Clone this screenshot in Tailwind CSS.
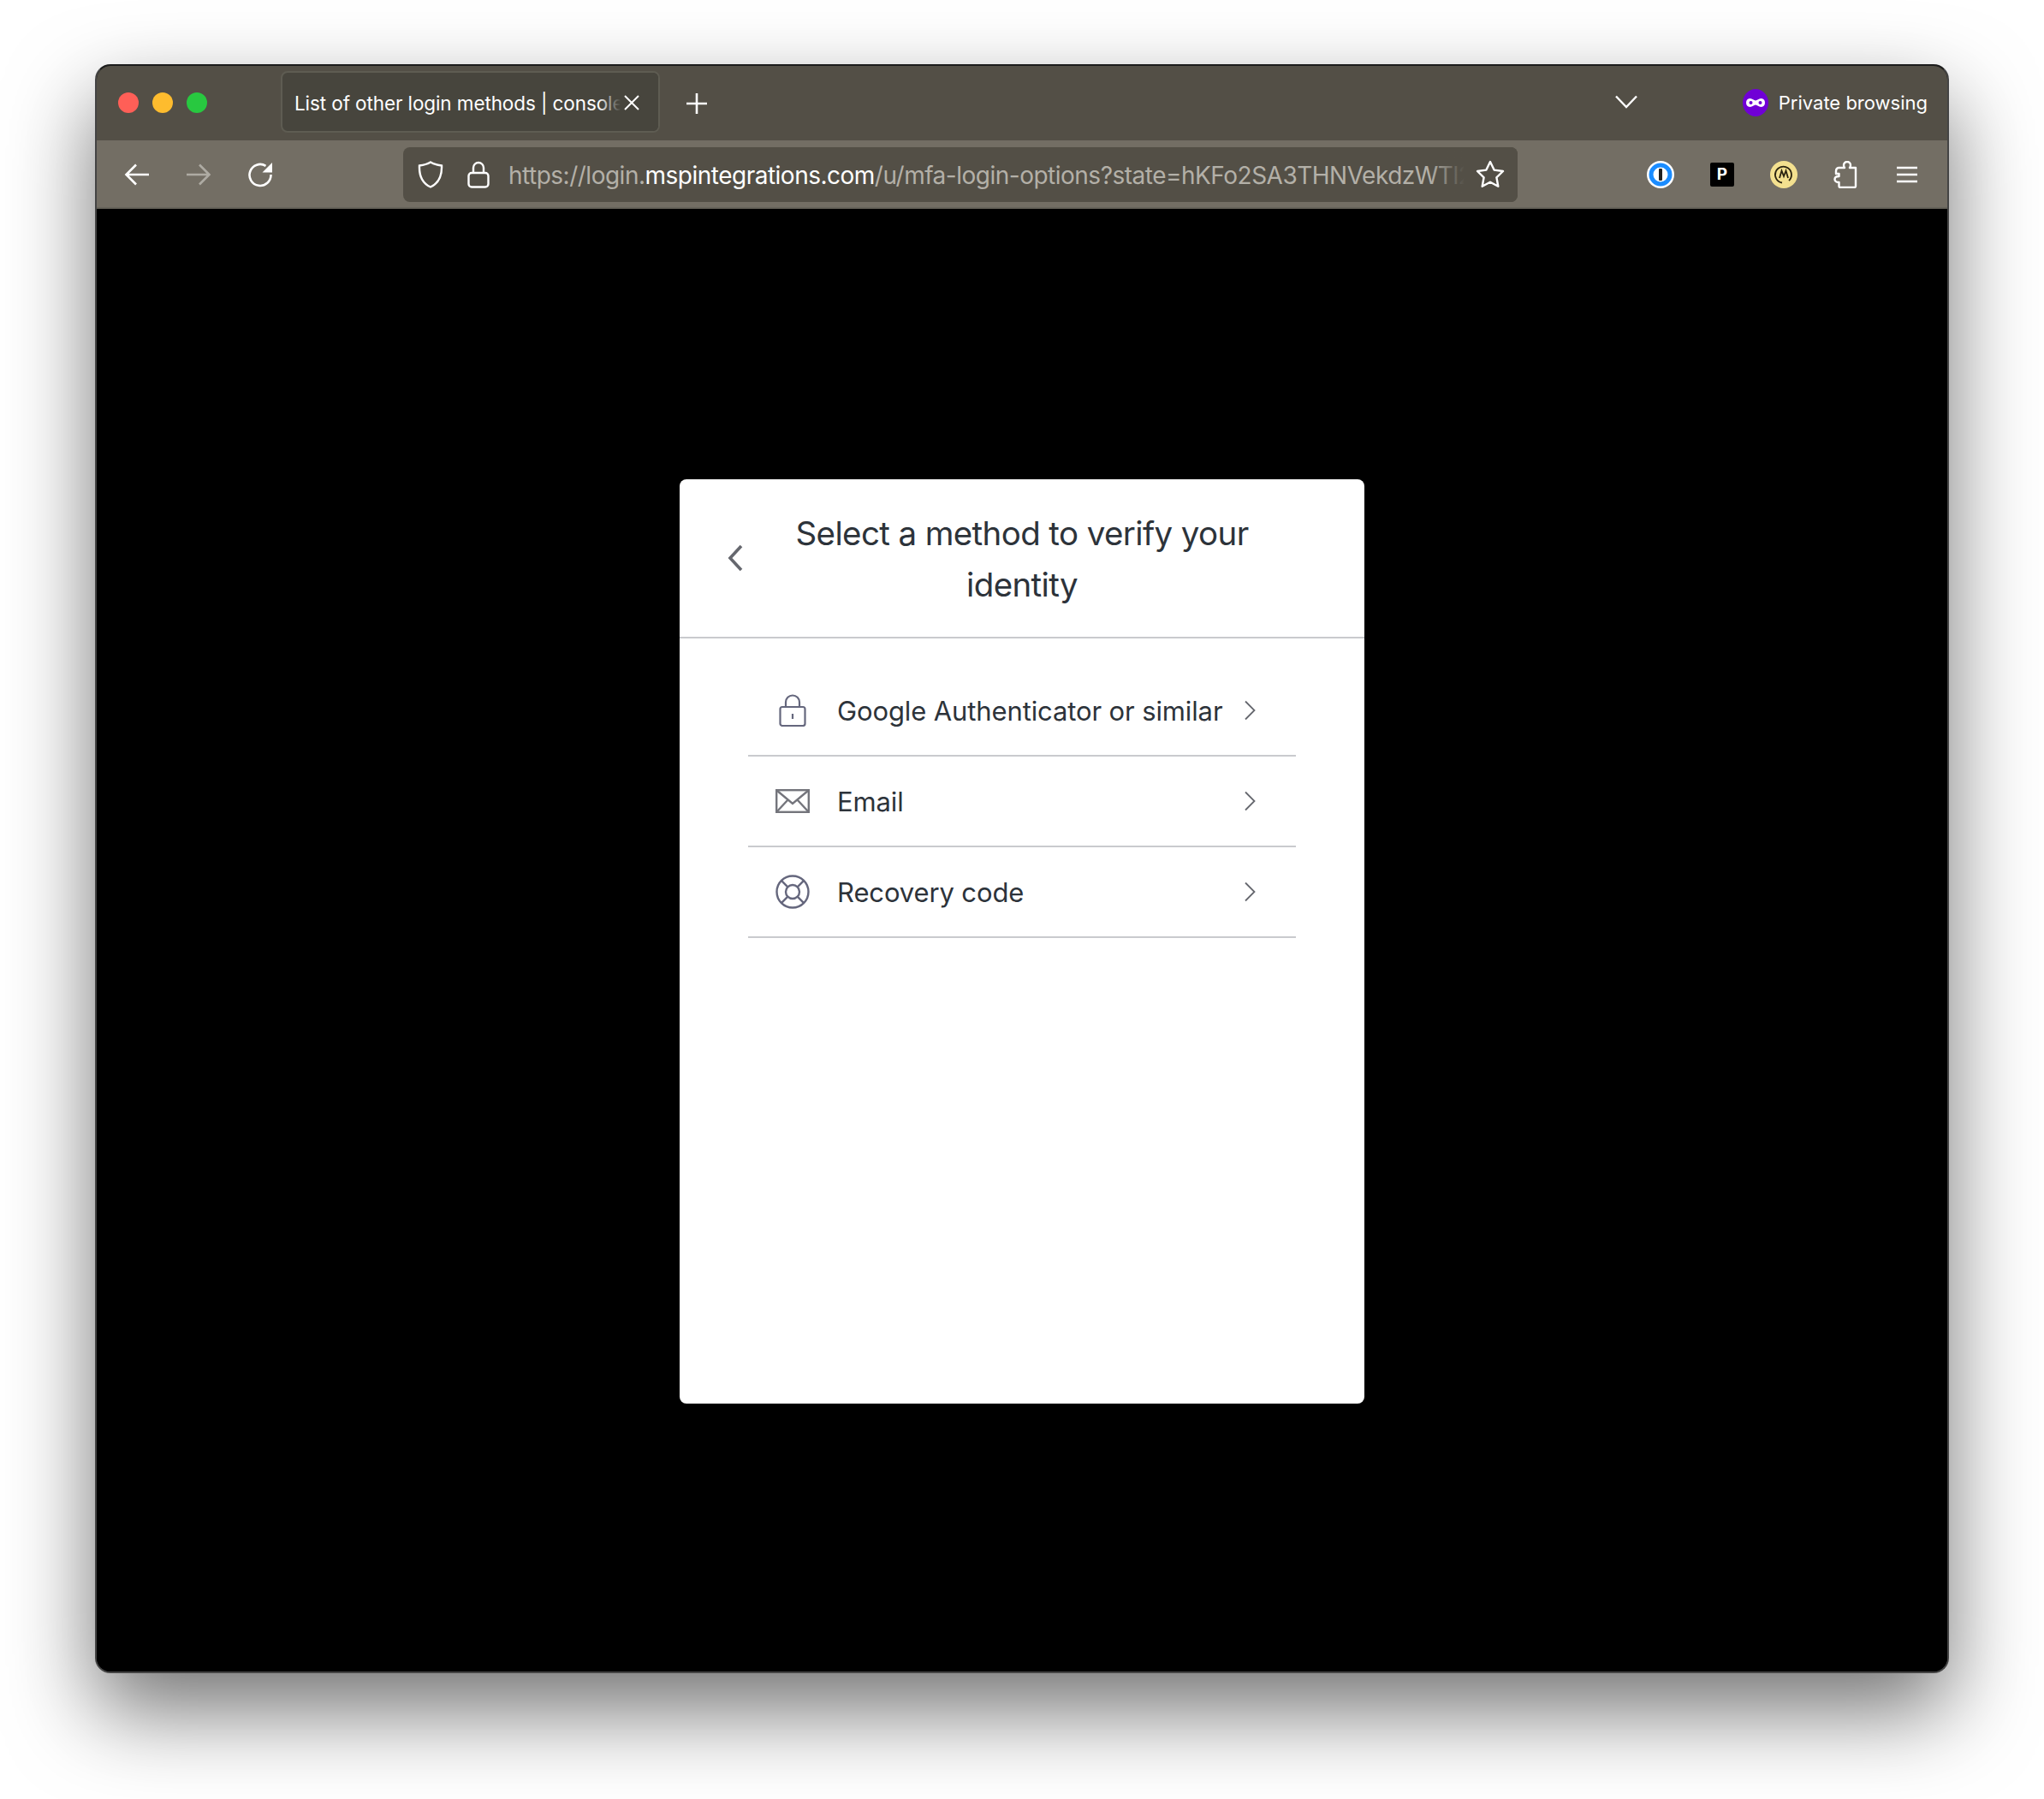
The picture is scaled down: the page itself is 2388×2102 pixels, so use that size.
<!DOCTYPE html>
<html>
<head>
<meta charset="utf-8">
<script src="https://cdn.jsdelivr.net/npm/@tailwindcss/browser@4"></script>
</head>
<body class="bg-white">
<div class="w-[2388px] h-[2102px] pt-[75px] pl-[111px] bg-white overflow-hidden font-['Inter',sans-serif]">
  <div class="w-[2166px] h-[1880px] flex flex-col rounded-[18px] overflow-hidden border-2 border-[#444444] border-t-[#1c1c1c] bg-black shadow-[0_44px_100px_rgba(0,0,0,0.55)]">
    <!-- title bar -->
    <div class="h-[87px] shrink-0 bg-[#534f46] flex items-center pl-[25px] pr-[23px]">
      <div class="flex gap-[16px] -mt-[1px]">
        <span class="w-[24px] h-[24px] rounded-full bg-[#ff5f57]"></span>
        <span class="w-[24px] h-[24px] rounded-full bg-[#febc2e]"></span>
        <span class="w-[24px] h-[24px] rounded-full bg-[#28c840]"></span>
      </div>
      <div class="relative ml-[86px] w-[443px] h-[72px] -mt-[4px] rounded-[8px] bg-[#47453d] border-2 border-[#5e5c52] flex items-center pl-[14px] pt-[5px] overflow-hidden">
        <span class="text-[22.5px] leading-[30px] tracking-[-0.1px] text-white whitespace-nowrap">List of other login methods | console</span>
        <div class="absolute right-0 top-0 bottom-0 w-[44px] bg-[#47453d]"></div>
        <div class="absolute right-[44px] top-0 bottom-0 w-[26px] bg-linear-to-r from-[#47453d00] to-[#47453d]"></div>
        <svg class="absolute right-[22px] top-[26px]" width="18" height="18" viewBox="0 0 18 18" fill="none" stroke="#fff" stroke-width="2"><path d="M1 1l16 16M17 1L1 17"/></svg>
      </div>
      <svg class="ml-[31px]" width="24" height="24" viewBox="0 0 24 24" fill="none" stroke="#fff" stroke-width="2.6"><path d="M12 0v24M0 12h24"/></svg>
      <svg class="ml-[1061px] -mt-[4px]" width="26" height="16" viewBox="0 0 26 16" fill="none" stroke="#fff" stroke-width="2.4"><path d="M1 1.5l12 12.5L25 1.5"/></svg>
      <div class="ml-auto flex items-center -mt-[1px]">
        <svg width="30" height="32" viewBox="0 0 30 32">
          <ellipse cx="15" cy="16" rx="15" ry="16" fill="#7000d6"/>
          <path d="M8.5 11c3 0 4.500 2.500 6.500 2.500S18.500 11 21.500 11c3 0 4.500 2.200 4.500 5s-1.500 5-4.500 5c-3 0-4.500-2.500-6.500-2.500S11.500 21 8.500 21C5.500 21 4 18.800 4 16s1.500-5 4.500-5z" fill="#fff"/>
          <circle cx="9.500" cy="16" r="2" fill="#7000d6"/><circle cx="20.500" cy="16" r="2" fill="#7000d6"/>
        </svg>
        <span class="ml-[12px] text-[22px] leading-[30px] text-white whitespace-nowrap">Private browsing</span>
      </div>
    </div>
    <!-- toolbar -->
    <div class="h-[80px] shrink-0 bg-[#736e64] border-b-2 border-b-[#66635a] pt-[2px] flex items-center">
      <div class="ml-[11px] flex items-center">
        <div class="w-[72px] flex justify-center items-center"><svg width="30" height="26" viewBox="0 0 30 26" fill="none" stroke="#fff" stroke-width="2.6"><path d="M29 13H3M14 1.500L2.500 13 14 24.500"/></svg></div>
        <div class="w-[72px] flex justify-center items-center"><svg width="30" height="26" viewBox="0 0 30 26" fill="none" stroke="#aeaba3" stroke-width="2.6"><path d="M1 13h26M16 1.500L27.500 13 16 24.500"/></svg></div>
        <div class="w-[72px] flex justify-center items-center"><svg width="30" height="30" viewBox="0 0 30 30" fill="none"><path d="M21.500 4.800A12.500 12.500 0 1 0 27.500 15" stroke="#fff" stroke-width="2.600"/><path d="M29 1v11.500H17.500z" fill="#fff"/></svg></div>
      </div>
      <div class="ml-[131px] w-[1302px] h-[64px] rounded-[8px] bg-[#534f46] relative flex items-center overflow-hidden">
        <svg class="ml-[17px] shrink-0" width="30" height="32" viewBox="0 0 30 32" fill="none" stroke="#fff" stroke-width="2.4"><path d="M15 1.500C20 4.500 24 5 28 5.500c.5 12-3 20.500-13 25C5 26 1.500 17.500 2 5.500 6 5 10 4.500 15 1.500z"/></svg>
        <svg class="ml-[28px] shrink-0" width="26" height="32" viewBox="0 0 26 32" fill="none" stroke="#fff" stroke-width="2.4"><path d="M7 14V8a6 6 0 0 1 12 0v6"/><rect x="1.500" y="14" width="23" height="16.500" rx="3.500"/></svg>
        <span class="ml-[22px] pt-[1px] text-[28px] tracking-[-0.5px] leading-[36px] whitespace-nowrap text-[#b3b0a8]">https://login.<span class="text-white">mspintegrations.com</span>/u/mfa-login-options?state=hKFo2SA3THNVekdzWTl2</span>
        <div class="absolute right-0 top-0 bottom-0 w-[62px] bg-[#534f46]"></div>
        <div class="absolute right-[62px] top-0 bottom-0 w-[40px] bg-linear-to-r from-[#534f4600] to-[#534f46]"></div>
        <svg class="absolute right-[15px] top-[15px]" width="34" height="33" viewBox="0 0 34 33" fill="none" stroke="#fff" stroke-width="2.400" stroke-linejoin="round"><path d="M17 2l4.600 9.600 10.400 1.400-7.600 7.300 1.900 10.500L17 25.700 7.700 30.800l1.900-10.500L2 13l10.400-1.400z"/></svg>
      </div>
      <div class="ml-[131px] flex items-center">
        <div class="w-[72px] flex justify-center items-center"><svg width="32" height="32" viewBox="0 0 32 32"><circle cx="16" cy="16" r="16" fill="#fff"/><circle cx="16" cy="16" r="11" fill="none" stroke="#1a8cff" stroke-width="5"/><rect x="14" y="9" width="4" height="14" rx="1" fill="#222"/></svg></div>
        <div class="w-[72px] flex justify-center items-center"><div class="w-[28px] h-[28px] rounded-[2px] bg-black text-white text-[19px] leading-[28px] font-bold text-center">P</div></div>
        <div class="w-[72px] flex justify-center items-center"><svg width="32" height="32" viewBox="0 0 32 32" fill="none"><circle cx="16" cy="16" r="16" fill="#f3e08f"/><path d="M22 23a9.500 9.500 0 1 0-8 2.500" stroke="#2a2310" stroke-width="1.800"/><path d="M11 20l2.500-8.500L16 18l2.500-6.500L21 20" stroke="#2a2310" stroke-width="1.800"/></svg></div>
        <div class="w-[72px] flex justify-center items-center"><svg width="28" height="32" viewBox="0 0 28 32" fill="none" stroke="#fff" stroke-width="2.400" stroke-linejoin="round"><path d="M13 8c-1-1.500-1-2-1-3a4 4 0 0 1 8 0c0 1 0 1.500-1 3h7v21.500a1.500 1.500 0 0 1-1.500 1.500H8a1.500 1.500 0 0 1-1.500-1.500V25c-3 0-5-1.500-5-3.500s2-3.500 5-3.500V15H3v-3c0-2 1-4 3-4h7z"/></svg></div>
        <div class="w-[72px] flex justify-center items-center"><svg width="26" height="20" viewBox="0 0 26 20" fill="none" stroke="#fff" stroke-width="2.400"><path d="M1 2h24M1 10h24M1 18h24"/></svg></div>
      </div>
    </div>
    <!-- content -->
    <div class="flex-1 bg-black pt-[316px] flex justify-center">
      <div class="w-[800px] h-[1080px] bg-white rounded-[8px] flex flex-col">
        <div class="grid grid-cols-[100px_1fr_100px] items-center h-[186px] border-b-2 border-[#c9cace]">
          <svg class="ml-[55px]" width="20" height="32" viewBox="0 0 20 32" fill="none" stroke="#65676e" stroke-width="3.600"><path d="M17 2L4 16l13 14"/></svg>
          <h1 class="text-center text-[38.5px] tracking-[-0.62px] leading-[60px] pt-[2px] font-normal text-[#2d333a]">Select a method to verify your identity</h1>
        </div>
        <div class="px-[80px] pt-[32px]">
          <div class="h-[106px] border-b-2 border-[#c9cace] flex items-center">
            <div class="w-[104px] shrink-0 flex justify-center"><svg width="32" height="38" viewBox="0 0 32 38" fill="none" stroke="#65677d" stroke-width="2.200"><path d="M8 15V9.500a8 8 0 0 1 16 0V15"/><rect x="1.500" y="15" width="29" height="22" rx="2.500"/><path d="M16 23v6"/></svg></div>
            <span class="flex-1 min-w-0 pt-[1px] text-[31px] tracking-[-0.12px] leading-[40px] text-[#2d333a] whitespace-nowrap">Google Authenticator or similar</span>
            <div class="w-[108px] shrink-0 flex justify-center"><svg width="14" height="24" viewBox="0 0 14 24" fill="none" stroke="#65676e" stroke-width="1.800"><path d="M2 1.500L12.500 12 2 22.500"/></svg></div>
          </div>
          <div class="h-[106px] border-b-2 border-[#c9cace] flex items-center">
            <div class="w-[104px] shrink-0 flex justify-center"><svg width="40" height="28" viewBox="0 0 40 28" fill="none" stroke="#74757c" stroke-width="2.400"><rect x="1.200" y="1.200" width="37.600" height="25.600"/><path d="M1.500 1.500L20 17 38.500 1.500M1.500 26.500l13-14M38.500 26.500l-13-14"/></svg></div>
            <span class="flex-1 min-w-0 pt-[1px] text-[31px] tracking-[-0.12px] leading-[40px] text-[#2d333a]">Email</span>
            <div class="w-[108px] shrink-0 flex justify-center"><svg width="14" height="24" viewBox="0 0 14 24" fill="none" stroke="#65676e" stroke-width="1.800"><path d="M2 1.500L12.500 12 2 22.500"/></svg></div>
          </div>
          <div class="h-[106px] border-b-2 border-[#c9cace] flex items-center">
            <div class="w-[104px] shrink-0 flex justify-center"><svg width="40" height="40" viewBox="0 0 40 40" fill="none" stroke="#65677d" stroke-width="2.400"><circle cx="20" cy="20" r="18.500"/><circle cx="20" cy="20" r="8"/><path d="M6.900 6.900l7.400 7.400M33.100 6.900l-7.400 7.400M6.900 33.100l7.400-7.400M33.100 33.100l-7.400-7.400"/></svg></div>
            <span class="flex-1 min-w-0 pt-[1px] text-[31px] tracking-[-0.12px] leading-[40px] text-[#2d333a]">Recovery code</span>
            <div class="w-[108px] shrink-0 flex justify-center"><svg width="14" height="24" viewBox="0 0 14 24" fill="none" stroke="#65676e" stroke-width="1.800"><path d="M2 1.500L12.500 12 2 22.500"/></svg></div>
          </div>
        </div>
      </div>
    </div>
  </div>
</div>
</body>
</html>
